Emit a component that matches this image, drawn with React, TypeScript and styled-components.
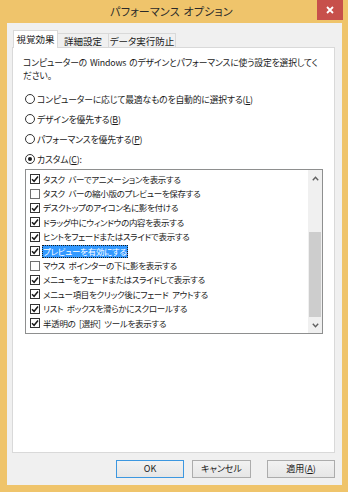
import React from 'react';
import styled, { createGlobalStyle } from 'styled-components';

const Global = createGlobalStyle`
  html, body { margin: 0; padding: 0; background: #EFC46B; }
  body {
    font-family: "Noto Sans CJK JP", "Noto Sans", sans-serif;
    font-feature-settings: "palt";
    -webkit-font-smoothing: antialiased;
  }
  * { box-sizing: border-box; }
`;

const Window = styled.div`
  width: 348px;
  height: 492px;
  background: #EFC46B;
  display: flex;
  flex-direction: column;
`;

const TitleBar = styled.div`
  height: 23px;
  display: grid;
  grid-template-columns: 1fr auto 1fr;
  align-items: start;
  padding-right: 5px;
`;

const Title = styled.div`
  grid-column: 2;
  font-size: 11px;
  line-height: 23px;
  color: #2a2a2a;
  letter-spacing: 0.2px;
  word-spacing: 1px;
`;

const CloseButton = styled.div`
  grid-column: 3;
  justify-self: end;
  width: 26px;
  height: 20px;
  background: #C7504B;
  display: flex;
  align-items: center;
  justify-content: center;
`;

const Client = styled.div`
  flex: 1;
  margin: 0 6px 7px 7px;
  background: #F0F0F0;
  padding: 7px 7px 7px 5px;
  display: flex;
  flex-direction: column;
`;

const TabRow = styled.div`
  height: 18px;
  display: flex;
  align-items: flex-end;
  margin-bottom: -1px;
  padding-left: 1px;
  position: relative;
  z-index: 1;
`;

const Tab = styled.div<{ $active?: boolean; $w: number }>`
  width: ${p => p.$w}px;
  height: ${p => (p.$active ? 18 : 15)}px;
  background: ${p => (p.$active ? '#FFFFFF' : '#F0F0F0')};
  border: 1px solid #D9D9D9;
  border-bottom: ${p => (p.$active ? 'none' : '1px solid #D9D9D9')};
  margin-left: ${p => (p.$active ? 0 : -1)}px;
  font-size: 9.5px;
  line-height: ${p => (p.$active ? 17 : 14)}px;
  color: #1a1a1a;
  display: flex;
  justify-content: center;
  &:first-child { margin-left: 0; }
`;

const Panel = styled.div`
  flex: 1;
  background: #FFFFFF;
  border: 1px solid #D9D9D9;
  padding: 8px 11px 0 10px;
  display: flex;
  flex-direction: column;
`;

const Description = styled.div`
  font-size: 8.8px;
  letter-spacing: -0.15px;
  word-spacing: 1px;
  line-height: 13px;
  color: #1a1a1a;
  white-space: nowrap;
  margin-bottom: 7px;
`;

const RadioRow = styled.div`
  height: 20px;
  display: flex;
  align-items: center;
  margin-left: 2px;
  font-size: 8.8px;
  letter-spacing: -0.15px;
  color: #1a1a1a;
  gap: 2px;
`;

const RadioCircle = styled.span<{ $on?: boolean }>`
  width: 10px;
  height: 10px;
  border-radius: 50%;
  border: 1px solid #333333;
  background: #FFFFFF;
  display: flex;
  align-items: center;
  justify-content: center;
  &::after {
    content: '';
    width: 4px;
    height: 4px;
    border-radius: 50%;
    background: ${p => (p.$on ? '#1a1a1a' : 'transparent')};
  }
`;

const U = styled.span`
  text-decoration: underline;
  text-underline-offset: 1px;
`;

const ListBox = styled.div`
  width: 298px;
  height: 165px;
  margin-left: 2px;
  border: 1px solid #8E8F8F;
  display: grid;
  grid-template-columns: 1fr 14px;
`;

const Items = styled.div`
  padding-top: 2px;
  padding-left: 4px;
  display: flex;
  flex-direction: column;
`;

const Item = styled.div`
  height: 14.4px;
  display: flex;
  align-items: center;
  font-size: 8.5px;
  letter-spacing: -0.3px;
  word-spacing: 2px;
  color: #1a1a1a;
  white-space: pre;
`;

const CheckBox = styled.span<{ $on?: boolean }>`
  width: 10px;
  height: 10px;
  border: 1px solid ${p => (p.$on ? '#333333' : '#707070')};
  background: #FFFFFF;
  display: flex;
  align-items: center;
  justify-content: center;
  margin-right: 3px;
  flex: none;
`;

const Label = styled.span<{ $sel?: boolean }>`
  padding: 0 1px;
  line-height: 13px;
  background: ${p => (p.$sel ? '#3399FF' : 'transparent')};
  color: ${p => (p.$sel ? '#FFFFFF' : 'inherit')};
  outline: ${p => (p.$sel ? '1px dotted #1a1a1a' : 'none')};
  outline-offset: -1px;
  margin-left: -1px;
`;

const ScrollBar = styled.div`
  background: #F0F0F0;
  display: flex;
  flex-direction: column;
`;

const ArrowBox = styled.div`
  height: 16px;
  display: flex;
  align-items: center;
  justify-content: center;
  flex: none;
`;

const Track = styled.div`
  flex: 1;
  display: flex;
  flex-direction: column;
  justify-content: flex-end;
  padding: 0 1px;
`;

const Thumb = styled.div`
  height: 85px;
  background: #CDCDCD;
`;

const ButtonRow = styled.div`
  margin-top: 7px;
  height: 18px;
  display: flex;
  justify-content: flex-end;
`;

const Button = styled.div<{ $default?: boolean; $w: number; $ml: number }>`
  width: ${p => p.$w}px;
  height: 18px;
  margin-left: ${p => p.$ml}px;
  border: 1px solid ${p => (p.$default ? '#3C97E0' : '#ACACAC')};
  background: linear-gradient(#F2F2F2, #E6E6E6);
  font-size: 9px;
  line-height: 16px;
  color: #1a1a1a;
  display: flex;
  justify-content: center;
`;

const items: { label: string; on: boolean; sel?: boolean }[] = [
  { label: 'タスク バーでアニメーションを表示する', on: true },
  { label: 'タスク バーの縮小版のプレビューを保存する', on: false },
  { label: 'デスクトップのアイコン名に影を付ける', on: true },
  { label: 'ドラッグ中にウィンドウの内容を表示する', on: true },
  { label: 'ヒントをフェードまたはスライドで表示する', on: true },
  { label: 'プレビューを有効にする', on: true, sel: true },
  { label: 'マウス ポインターの下に影を表示する', on: false },
  { label: 'メニューをフェードまたはスライドして表示する', on: true },
  { label: 'メニュー項目をクリック後にフェード アウトする', on: true },
  { label: 'リスト ボックスを滑らかにスクロールする', on: true },
  { label: '半透明の [選択] ツールを表示する', on: true },
];

const Check = () => (
  <svg width="8" height="8" viewBox="0 0 8 8">
    <path d="M1 4.2 L3.1 6.3 L7 1.6" fill="none" stroke="#1a1a1a" strokeWidth="1.5" />
  </svg>
);

const Chevron = ({ up }: { up?: boolean }) => (
  <svg width="7" height="5" viewBox="0 0 7 5">
    <path d={up ? 'M0.8 4.2 L3.5 1.3 L6.2 4.2' : 'M0.8 0.8 L3.5 3.7 L6.2 0.8'} fill="none" stroke="#606060" strokeWidth="1.4" />
  </svg>
);

export default function App() {
  return (
    <>
      <Global />
      <Window>
        <TitleBar>
          <Title>パフォーマンス オプション</Title>
          <CloseButton>
            <svg width="8" height="8" viewBox="0 0 8 8">
              <path d="M1 1 L7 7 M7 1 L1 7" stroke="#FFFFFF" strokeWidth="1.8" />
            </svg>
          </CloseButton>
        </TitleBar>
        <Client>
          <TabRow>
            <Tab $active $w={45}>視覚効果</Tab>
            <Tab $w={52}>詳細設定</Tab>
            <Tab $w={68}>データ実行防止</Tab>
          </TabRow>
          <Panel>
            <Description>
              コンピューターの Windows のデザインとパフォーマンスに使う設定を選択してく
              <br />
              ださい。
            </Description>
            <RadioRow>
              <RadioCircle />
              <span>コンピューターに応じて最適なものを自動的に選択する(<U>L</U>)</span>
            </RadioRow>
            <RadioRow>
              <RadioCircle />
              <span>デザインを優先する(<U>B</U>)</span>
            </RadioRow>
            <RadioRow>
              <RadioCircle />
              <span>パフォーマンスを優先する(<U>P</U>)</span>
            </RadioRow>
            <RadioRow>
              <RadioCircle $on />
              <span>カスタム(<U>C</U>):</span>
            </RadioRow>
            <ListBox>
              <Items>
                {items.map(it => (
                  <Item key={it.label}>
                    <CheckBox $on={it.on}>{it.on && <Check />}</CheckBox>
                    <Label $sel={it.sel}>{it.label}</Label>
                  </Item>
                ))}
              </Items>
              <ScrollBar>
                <ArrowBox><Chevron up /></ArrowBox>
                <Track><Thumb /></Track>
                <ArrowBox><Chevron /></ArrowBox>
              </ScrollBar>
            </ListBox>
          </Panel>
          <ButtonRow>
            <Button $default $w={68} $ml={0}>OK</Button>
            <Button $w={59} $ml={8}>キャンセル</Button>
            <Button $w={68} $ml={16}>適用(<U>A</U>)</Button>
          </ButtonRow>
        </Client>
      </Window>
    </>
  );
}
